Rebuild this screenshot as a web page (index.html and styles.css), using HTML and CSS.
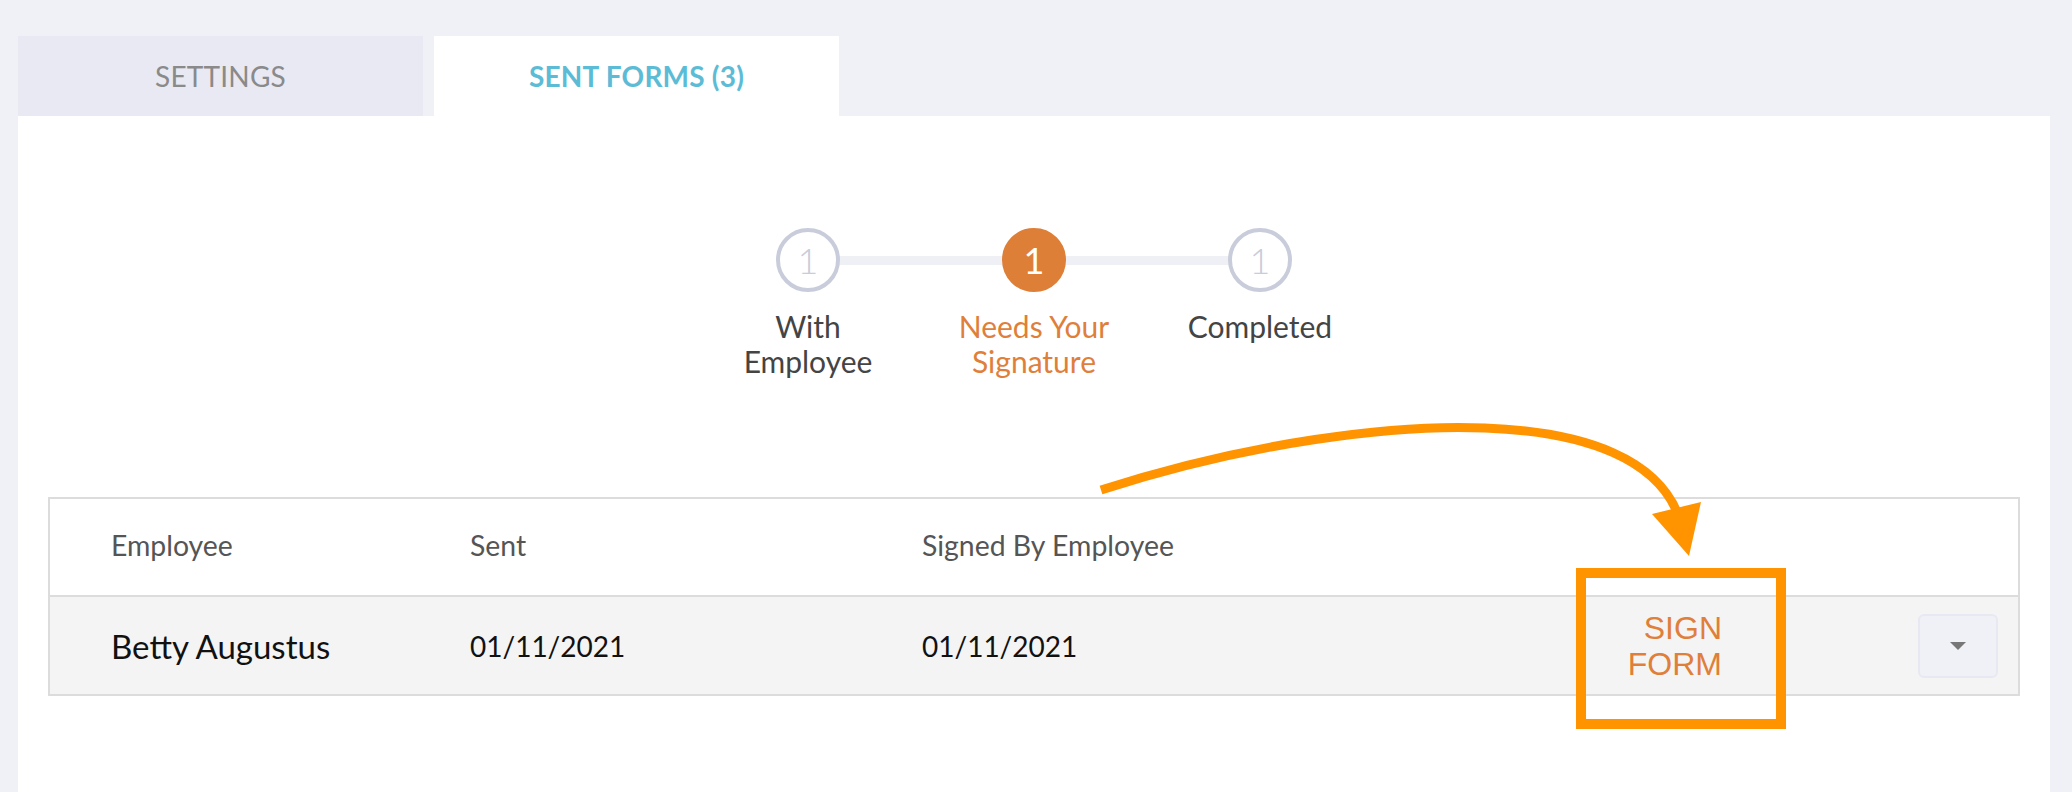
FILE: index.html
```html
<!DOCTYPE html>
<html lang="en">
<head>
<meta charset="utf-8">
<title>Sent Forms</title>
<link rel="stylesheet" href="styles.css">
</head>
<body>
<div class="page">
  <nav class="tabs">
    <div class="tab">SETTINGS</div>
    <div class="tab active">SENT FORMS (3)</div>
  </nav>
  <section class="panel">
    <div class="stepper">
      <div class="step">
        <div class="circle">1</div>
        <div class="label">With<br>Employee</div>
      </div>
      <div class="step current">
        <div class="circle">1</div>
        <div class="label">Needs Your<br>Signature</div>
      </div>
      <div class="step">
        <div class="circle">1</div>
        <div class="label">Completed</div>
      </div>
    </div>
    <div class="table">
      <div class="row head">
        <div class="cell">Employee</div>
        <div class="cell">Sent</div>
        <div class="cell">Signed By Employee</div>
        <div class="cell"></div>
        <div class="cell"></div>
      </div>
      <div class="row body">
        <div class="cell name">Betty Augustus</div>
        <div class="cell">01/11/2021</div>
        <div class="cell">01/11/2021</div>
        <div class="cell action">SIGN<br>FORM</div>
        <div class="cell"><button class="dropdown" type="button"><span class="caret"></span></button></div>
      </div>
    </div>
  </section>
</div>
<svg class="annotation" width="2072" height="792" viewBox="0 0 2072 792" xmlns="http://www.w3.org/2000/svg">
  <path d="M1101 490 C1250 442 1395 424 1485 428 C1592 432 1656 462 1677 512" fill="none" stroke="#ff9400" stroke-width="9"/>
  <polygon points="1652,514 1701,502 1689,556" fill="#ff9400"/>
  <rect x="1581" y="573" width="200" height="151" fill="none" stroke="#ff9400" stroke-width="10"/>
</svg>
</body>
</html>
```
FILE: styles.css
```css
* { box-sizing: border-box; }

html, body {
  margin: 0;
  padding: 0;
  background: #f0f1f6;
  font-family: Lato, "Noto Sans", sans-serif;
}

body {
  position: relative;
  width: 2072px;
  height: 792px;
  overflow: hidden;
}

.page {
  padding: 36px 22px 0 18px;
}

.tabs {
  display: flex;
  gap: 11px;
}

.tab {
  width: 405px;
  height: 80px;
  display: flex;
  align-items: center;
  justify-content: center;
  background: #e8e9f3;
  color: #8a8a8a;
  font-size: 28px;
  letter-spacing: 0.2px;
}

.tab.active {
  background: #ffffff;
  color: #5cbcd6;
  font-weight: 700;
}

.panel {
  background: #ffffff;
  height: 700px;
  padding: 112px 30px 0 30px;
}

.stepper {
  position: relative;
  width: 678px;
  margin: 0 auto;
  display: grid;
  grid-template-columns: repeat(3, 226px);
}

.stepper::before {
  content: "";
  position: absolute;
  left: 113px;
  right: 113px;
  top: 28px;
  height: 9px;
  background: #eff0f5;
}

.step {
  display: flex;
  flex-direction: column;
  align-items: center;
  position: relative;
}

.circle {
  width: 64px;
  height: 64px;
  border-radius: 50%;
  border: 4px solid #c9ccda;
  background: #ffffff;
  color: #c9ccda;
  font-size: 36px;
  font-weight: 300;
  display: flex;
  align-items: center;
  justify-content: center;
  position: relative;
  z-index: 1;
}

.step.current .circle {
  background: #de7f38;
  border-color: #de7f38;
  color: #ffffff;
  font-weight: 400;
}

.label {
  margin-top: 17px;
  font-size: 30px;
  line-height: 35px;
  color: #444444;
  text-align: center;
}

.step.current .label {
  color: #e07f3a;
}

.table {
  margin-top: 118px;
  border: 2px solid #dcdcdc;
}

.row {
  display: grid;
  grid-template-columns: 359px 452px 1fr auto 80px;
  align-items: center;
  padding: 0 20px 0 61px;
}

.row.head {
  height: 98px;
  padding-bottom: 4px;
  background: #ffffff;
  border-bottom: 2px solid #dcdcdc;
  color: #555555;
  font-size: 28.4px;
}

.row.body {
  height: 97px;
  background: #f4f4f4;
  color: #111111;
  font-size: 28px;
}

.cell.name {
  font-size: 33px;
}

.cell.action {
  margin-right: 196px;
  text-align: right;
  font-family: "Liberation Sans", Arial, sans-serif;
  font-size: 32px;
  line-height: 36px;
  color: #e07f3a;
}

.dropdown {
  width: 80px;
  height: 64px;
  margin: 0;
  padding: 0;
  background: #f0f0f7;
  border: 2px solid #e8e8f3;
  border-radius: 6px;
  display: flex;
  align-items: center;
  justify-content: center;
}

.caret {
  width: 0;
  height: 0;
  border-left: 8px solid transparent;
  border-right: 8px solid transparent;
  border-top: 8px solid #777777;
}

.annotation {
  position: absolute;
  left: 0;
  top: 0;
  pointer-events: none;
}
```
